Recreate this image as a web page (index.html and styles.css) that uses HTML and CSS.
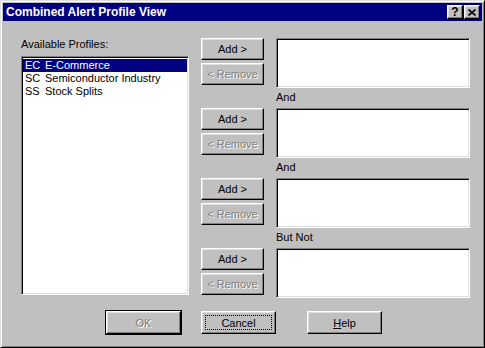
FILE: index.html
```html
<!DOCTYPE html>
<html lang="en">
<head>
    <meta charset="UTF-8">
    <meta name="viewport" content="width=device-width, initial-scale=1.0">
    <title>Combined Alert Profile View</title>
    <link rel="stylesheet" href="styles.css">
</head>
<body>
    <div class="window">
        <div class="titlebar">
            <span class="title">Combined Alert Profile View</span>
            <div class="title-buttons">
                <span class="tbtn help-btn">?</span>
                <span class="tbtn">
                    <svg width="8" height="7" viewBox="0 0 8 7"><path d="M0.5 0.5L7.5 6.5M7.5 0.5L0.5 6.5" stroke="#000" stroke-width="1.6" fill="none"/></svg>
                </span>
            </div>
        </div>
        <div class="content">
            <div class="main">
                <div class="profiles">
                    <div class="label">Available Profiles:</div>
                    <div class="listbox">
                        <div class="item selected"><span class="code">EC</span>E-Commerce</div>
                        <div class="item"><span class="code">SC</span>Semiconductor Industry</div>
                        <div class="item"><span class="code">SS</span>Stock Splits</div>
                    </div>
                </div>
                <div class="criteria">
                    <div class="group">
                        <div class="actions">
                            <button class="btn">Add &gt;</button>
                            <button class="btn" disabled>&lt; Remove</button>
                        </div>
                        <div class="field"></div>
                    </div>
                    <div class="joiner">And</div>
                    <div class="group">
                        <div class="actions">
                            <button class="btn">Add &gt;</button>
                            <button class="btn" disabled>&lt; Remove</button>
                        </div>
                        <div class="field"></div>
                    </div>
                    <div class="joiner">And</div>
                    <div class="group">
                        <div class="actions">
                            <button class="btn">Add &gt;</button>
                            <button class="btn" disabled>&lt; Remove</button>
                        </div>
                        <div class="field"></div>
                    </div>
                    <div class="joiner">But Not</div>
                    <div class="group">
                        <div class="actions">
                            <button class="btn">Add &gt;</button>
                            <button class="btn" disabled>&lt; Remove</button>
                        </div>
                        <div class="field"></div>
                    </div>
                </div>
            </div>
            <div class="footer">
                <button class="btn dialog-btn default" disabled>OK</button>
                <button class="btn dialog-btn focused">Cancel</button>
                <button class="btn dialog-btn help"><u>H</u>elp</button>
            </div>
        </div>
    </div>
</body>
</html>
```

FILE: styles.css
```css
body {
    margin: 0;
    background-color: #c0c0c0;
    font-family: "Liberation Sans", Arial, sans-serif;
    font-size: 11px;
    color: #000;
}

.window {
    width: 485px;
    height: 348px;
    box-sizing: border-box;
    padding: 2px;
    background-color: #c0c0c0;
    border: 1px solid;
    border-color: #dfdfdf #000 #000 #dfdfdf;
    box-shadow: inset 1px 1px #fff, inset -1px -1px #808080;
}

.titlebar {
    height: 18px;
    background-color: #000080;
    color: #fff;
    display: flex;
    align-items: center;
    justify-content: space-between;
    padding-left: 3px;
    padding-right: 2px;
}

.title {
    font-weight: bold;
    font-size: 12px;
    line-height: 18px;
}

.title-buttons {
    display: flex;
    gap: 1px;
}

.tbtn {
    width: 16px;
    height: 14px;
    box-sizing: border-box;
    background-color: #c0c0c0;
    border: 1px solid;
    border-color: #fff #000 #000 #fff;
    box-shadow: inset -1px -1px #808080, inset 1px 1px #dfdfdf;
    display: flex;
    align-items: center;
    justify-content: center;
    color: #000;
}

.help-btn {
    font-weight: bold;
    font-size: 12px;
    line-height: 12px;
}

.content {
    padding: 17px 12px 0 18px;
}

.main {
    display: flex;
    align-items: flex-start;
    gap: 12px;
}

.profiles {
    width: 168px;
}

.label {
    line-height: 13px;
    margin-bottom: 5px;
}

.listbox,
.field {
    box-sizing: border-box;
    background-color: #fff;
    border: 1px solid;
    border-color: #808080 #fff #fff #808080;
    box-shadow: inset 1px 1px #000, inset -1px -1px #dfdfdf;
}

.listbox {
    height: 239px;
    padding: 2px 1px 0 1px;
}

.item {
    height: 13px;
    line-height: 13px;
    padding-left: 2px;
    white-space: nowrap;
}

.item.selected {
    background-color: #000080;
    color: #fff;
}

.code {
    display: inline-block;
    width: 20px;
}

.criteria {
    width: 269px;
}

.group {
    display: flex;
    gap: 12px;
}

.actions {
    width: 63px;
    display: flex;
    flex-direction: column;
    gap: 3px;
}

.field {
    width: 194px;
    height: 50px;
}

.joiner {
    height: 20px;
    box-sizing: border-box;
    padding: 3px 0 4px 75px;
    line-height: 13px;
}

.btn {
    font-family: "Liberation Sans", Arial, sans-serif;
    font-size: 11px;
    color: #000;
    height: 22px;
    padding: 0;
    box-sizing: border-box;
    background-color: #c0c0c0;
    border: 1px solid;
    border-color: #fff #000 #000 #fff;
    box-shadow: inset -1px -1px #808080, inset 1px 1px #dfdfdf;
    border-radius: 0;
}

.btn:disabled {
    color: #808080;
    text-shadow: 1px 1px #fff;
}

.footer {
    display: flex;
    justify-content: center;
    gap: 20px;
    margin-top: 13px;
    padding-right: 3px;
}

.dialog-btn {
    width: 75px;
    height: 23px;
}

.dialog-btn.default {
    box-shadow: inset -1px -1px #808080, inset 1px 1px #dfdfdf, 0 0 0 1px #000;
}

.dialog-btn.focused {
    outline: 1px dotted #000;
    outline-offset: -5px;
}

.dialog-btn.help {
    margin-left: 11px;
}
```
